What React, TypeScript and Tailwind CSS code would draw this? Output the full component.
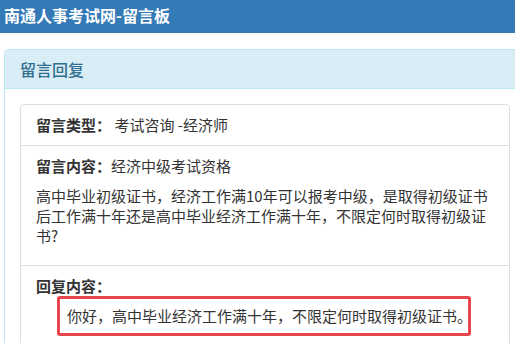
import React from 'react';

const font = { fontFamily: '"Noto Sans CJK SC", "Noto Sans", sans-serif' };

const App = () => {
    return (
        <div className="w-[515px] h-[343px] overflow-hidden bg-white text-[#333]" style={font}>
            <div className="h-[33px] bg-[#337ab7] pl-[4px]">
                <h1 className="text-[16px] leading-[30px] font-bold text-white">南通人事考试网-留言板</h1>
            </div>

            <div className="mt-[16px] ml-[4px] w-[522px] border border-[#bce8f1] rounded-[4px]">
                <div className="bg-[#d9edf7] border-b border-[#bce8f1] px-[15px] py-[10px] rounded-t-[3px]">
                    <h3 className="text-[16px] leading-[18px] font-medium text-[#31708f]">留言回复</h3>
                </div>

                <div className="p-[15px]">
                    <div className="border border-[#ddd] rounded-[4px] divide-y divide-[#ddd] text-[15px] leading-[20px]">
                        <div className="px-[15px] py-[10px]">
                            <span className="font-bold">留言类型：</span>
                            <span> 考试咨询 -经济师</span>
                        </div>

                        <div className="px-[15px] pt-[10px] pb-[19px]">
                            <p className="mb-[10px]">
                                <span className="font-bold">留言内容：</span>经济中级考试资格
                            </p>
                            <p>高中毕业初级证书，经济工作满10年可以报考中级，是取得初级证书后工作满十年还是高中毕业经济工作满十年，不限定何时取得初级证书?</p>
                        </div>

                        <div className="px-[15px] pt-[10px] pb-[20px]">
                            <p className="font-bold">回复内容：</p>
                            <div className="ml-[21px] w-[414px] border-[3px] border-[#e8474b] rounded-[3px] pl-[7px] py-[7px] whitespace-nowrap">
                                你好，高中毕业经济工作满十年，不限定何时取得初级证书。
                            </div>
                        </div>
                    </div>
                </div>
            </div>
        </div>
    );
};

export default App;
